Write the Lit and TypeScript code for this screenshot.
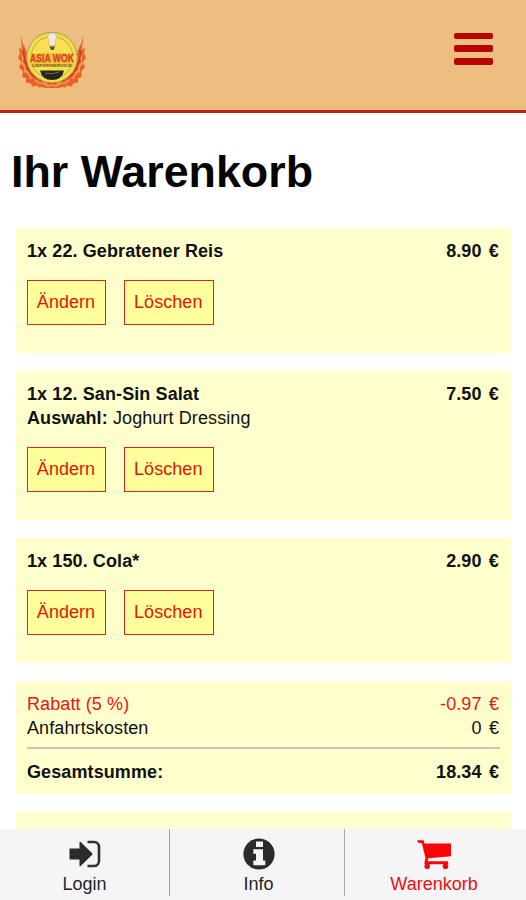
import { LitElement, html, css, svg } from "lit";
import { customElement, property } from "lit/decorators.js";

interface Item {
  title: string;
  price: string;
  choice?: string;
}

const ITEMS: Item[] = [
  { title: "1x 22. Gebratener Reis", price: "8.90 €" },
  { title: "1x 12. San-Sin Salat", price: "7.50 €", choice: "Joghurt Dressing" },
  { title: "1x 150. Cola*", price: "2.90 €" },
];

const flameSide = svg`
  <path fill="#ea5f2a" d="M3.500 5C3 11 6 14 8 19l3 12 8 14 15 7v5c-5 .5-7-1-10-1l-3 .5-2-2-5 1-1-3-5-1 0-4-4-2 1-5-4-4 2-5-3-5 2-4-1-6c2 1 2 2 3 3C4 13 2 9 3.500 5z"/>
  <path fill="#f39a4c" d="M3 22l3 5-1 4 3 4 0 4 4 2 1 5 5 1 3 4 6 0 5 3-6 0-3-2-5 0-2-4-4 0-2-5-4-2 0-5-3-3 1-5z"/>
  <path fill="none" stroke="#d42f16" stroke-width="1.300" d="M6 19c-2 5 2 7 0 11 4 3 1 7 5 9 0 5 5 4 6 8 4-1 5 4 9 4"/>`;

@customElement("shop-logo")
class ShopLogo extends LitElement {
  static styles = css`
    :host { display: block; width: 68px; height: 58px; }
    svg { display: block; }
    .name { font: bold 10px "Liberation Sans", sans-serif; fill: #ee4a26; stroke: #c4401a; stroke-width: 0.4; }
    .sub { font: bold 4px "Liberation Sans", sans-serif; fill: #77601d; }
  `;
  render() {
    return html`<svg width="68" height="58" viewBox="0 0 68 58">
      <g>${flameSide}</g>
      <g transform="translate(68 0) scale(-1 1)">${flameSide}</g>
      <circle cx="34" cy="26.500" r="25.200" fill="#f2dc4c" stroke="#a8a05c" stroke-width="1" />
      <circle cx="34" cy="26.500" r="21" fill="#f8e052" stroke="#a9a34c" stroke-width="0.800" />
      <path d="M30 5c0-4 8.500-4 8.500 0 1 2-1 3-1 4v5.500h-6.500V9c0-1-2-2-1-4z" fill="#eee9dc" stroke="#b8b095" stroke-width="0.600" />
      <path d="M31.500 15.500h5.500l-1.500 3.500h-2.500z" fill="#51533b" />
      <rect x="12" y="22.500" width="44" height="13" fill="#f0c443" />
      <text class="name" x="34" y="30.700" text-anchor="middle" textLength="44" lengthAdjust="spacingAndGlyphs">ASIA WOK</text>
      <text class="sub" x="34" y="35.500" text-anchor="middle" textLength="40" lengthAdjust="spacingAndGlyphs">LIEFERSERVICE</text>
      <path d="M22 39.500h24q-2 9.500-12 9.500t-12-9.500z" fill="#252619" />
      <path d="M27 42q7 2 14-1" fill="none" stroke="#68705a" stroke-width="1" />
      <path d="M13 44l3 4 2-1 3 4 3-1 4 3 3-2 3 2 3-2 3 2 4-3 3 1 3-4 2 1 3-4-4 9-10 4H27l-10-4z" fill="#e9622c" />
      <path d="M17 49l4 3 4 0 5 3 4-1 4 1 5-3 4 0 4-3" fill="none" stroke="#f6ac46" stroke-width="1.200" />
    </svg>`;
  }
}

@customElement("cart-item")
class CartItem extends LitElement {
  @property({ attribute: false }) item!: Item;

  static styles = css`
    :host { display: block; background: #ffffce; padding: 11px 11px 28px; }
    .line { display: flex; justify-content: space-between; height: 24px; line-height: 24px; white-space: nowrap; letter-spacing: 0.1px; }
    .strong { font-weight: bold; }
    .price { word-spacing: 2.2px; padding-right: 1px; }
    .actions { display: flex; gap: 18px; margin-top: 17px; }
    .btn {
      box-sizing: border-box; height: 45px; padding: 0 1px 0 0; margin: 0;
      border: 1px solid #d42a1c; border-radius: 0; background: #ffff9b;
      color: #e01708; font: 18px/41px "Liberation Sans", Arial, sans-serif;
      letter-spacing: 0.05px;
    }
    .edit { width: 79px; }
    .delete { width: 89.5px; }
  `;
  render() {
    const { title, price, choice } = this.item;
    return html`
      <div class="line strong"><span>${title}</span><span class="price">${price}</span></div>
      ${choice ? html`<div class="line"><span><span class="strong">Auswahl:</span> ${choice}</span></div>` : null}
      <div class="actions">
        <button class="btn edit">Ändern</button>
        <button class="btn delete">Löschen</button>
      </div>`;
  }
}

@customElement("app-root")
class AppRoot extends LitElement {
  static styles = css`
    :host {
      display: flex; flex-direction: column; height: 100vh; overflow: hidden;
      background: #fff; color: #111; font: 18px/24px "Liberation Sans", Arial, sans-serif;
    }
    .top {
      box-sizing: border-box; flex: none; height: 113px; padding: 31px 33px 0 18px;
      display: flex; justify-content: space-between; align-items: flex-start;
      background: #edbe80; border-bottom: 3px solid #bd2115;
    }
    .menu { display: flex; flex-direction: column; gap: 6px; margin-top: 1.5px; }
    .bar { width: 39px; height: 6.7px; border-radius: 2px; background: #b90407; }
    .content { flex: 1; min-height: 0; overflow: hidden; }
    h1 { margin: 0; padding: 32px 0 0 11px; height: 83px; font-size: 44.8px; line-height: 52px; color: #050505; white-space: nowrap; }
    .cards { display: flex; flex-direction: column; gap: 18px; padding: 0 15px 0 16px; }
    .summary { background: #ffffce; padding: 11px 11px 10px; }
    .row { display: flex; justify-content: space-between; height: 24px; letter-spacing: 0.1px; }
    .amount { word-spacing: 2.2px; padding-right: 1px; }
    .discount { color: #ee1414; }
    .rule { height: 2px; background: #c6c4bd; margin: 7px 0 11px; }
    .total { font-weight: bold; }
    .more { height: 60px; background: #ffffce; }
    .nav { flex: none; height: 71px; display: grid; grid-template-columns: 170px 175px 1fr; background: #f5f5f8; }
    .tab {
      box-sizing: border-box; height: 67px; padding-top: 9px; border-right: 1px solid #a5a5a7;
      display: flex; flex-direction: column; align-items: center; color: #252525;
    }
    .info { padding-left: 3px; }
    .active { border-right: 0; padding-right: 3px; color: #ee0d0d; }
    .icon { display: block; width: 36px; height: 32px; flex: none; }
    .label { line-height: 24px; margin-top: 2px; }
  `;

  render() {
    return html`
      <header class="top">
        <shop-logo></shop-logo>
        <div class="menu"><div class="bar"></div><div class="bar"></div><div class="bar"></div></div>
      </header>
      <main class="content">
        <h1>Ihr Warenkorb</h1>
        <div class="cards">
          ${ITEMS.map((item) => html`<cart-item .item=${item}></cart-item>`)}
          <section class="summary">
            <div class="row discount"><span>Rabatt (5 %)</span><span class="amount">-0.97 €</span></div>
            <div class="row"><span>Anfahrtskosten</span><span class="amount">0 €</span></div>
            <div class="rule"></div>
            <div class="row total"><span>Gesamtsumme:</span><span class="amount">18.34 €</span></div>
          </section>
          <section class="more"></section>
        </div>
      </main>
      <nav class="nav">
        <div class="tab">
          <svg class="icon" viewBox="0 0 36 32">
            <path fill="#2b2b2b" d="M2.500 10.500h10V4.500q0-1.500 1.200-.4l11.500 11.200q.6.700 0 1.400l-11.500 11.200q-1.200 1.100-1.200-.4v-6H2.500z" />
            <path fill="none" stroke="#303030" stroke-width="2.600" d="M20.500 4h6.500a5 5 0 0 1 5 5v14a5 5 0 0 1-5 5h-6.500" />
          </svg>
          <span class="label">Login</span>
        </div>
        <div class="tab info">
          <svg class="icon" viewBox="0 0 36 32">
            <circle cx="18" cy="16" r="15.600" fill="#2b2b2b" />
            <path fill="#f5f5f8" d="M15 3.500h7v5.500H15zM12.300 11.300h9.700v11.200h2.300v4.700H12.300v-4.700h2.700v-6.700h-2.700z" />
          </svg>
          <span class="label">Info</span>
        </div>
        <div class="tab active">
          <svg class="icon" viewBox="0 0 36 32">
            <path fill="#fa0505" d="M1 2.300h6q.6 0 .8.700L8.600 5.500H35v12.700L12.300 20.200l-.8 3.100H31q1.200 0 1.200 1.200v1.700H9.600q-1.500 0-1.200-1.500l1.100-4.700L5.800 4.900H2.500z" />
            <circle cx="11.200" cy="28.200" r="2.800" fill="#fa0505" />
            <circle cx="29.500" cy="28.200" r="2.800" fill="#fa0505" />
          </svg>
          <span class="label">Warenkorb</span>
        </div>
      </nav>`;
  }
}
